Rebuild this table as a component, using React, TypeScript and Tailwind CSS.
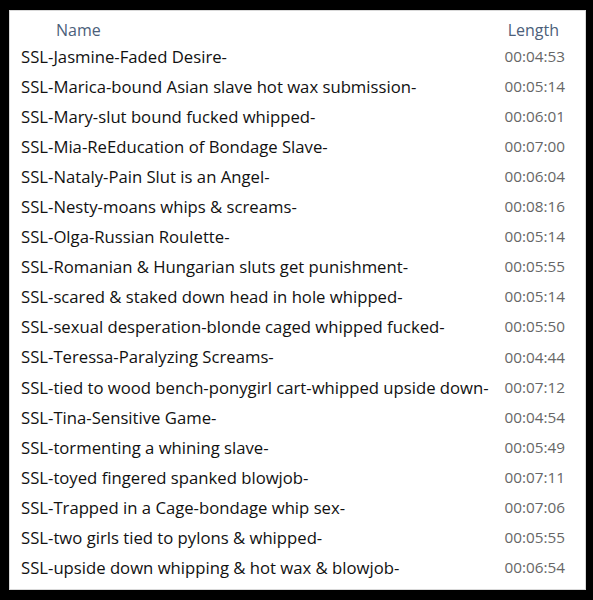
const rows: [string, string][] = [
  ["SSL-Jasmine-Faded Desire-", "00:04:53"],
  ["SSL-Marica-bound Asian slave hot wax submission-", "00:05:14"],
  ["SSL-Mary-slut bound fucked whipped-", "00:06:01"],
  ["SSL-Mia-ReEducation of Bondage Slave-", "00:07:00"],
  ["SSL-Nataly-Pain Slut is an Angel-", "00:06:04"],
  ["SSL-Nesty-moans whips & screams-", "00:08:16"],
  ["SSL-Olga-Russian Roulette-", "00:05:14"],
  ["SSL-Romanian & Hungarian sluts get punishment-", "00:05:55"],
  ["SSL-scared & staked down head in hole whipped-", "00:05:14"],
  ["SSL-sexual desperation-blonde caged whipped fucked-", "00:05:50"],
  ["SSL-Teressa-Paralyzing Screams-", "00:04:44"],
  ["SSL-tied to wood bench-ponygirl cart-whipped upside down-", "00:07:12"],
  ["SSL-Tina-Sensitive Game-", "00:04:54"],
  ["SSL-tormenting a whining slave-", "00:05:49"],
  ["SSL-toyed fingered spanked blowjob-", "00:07:11"],
  ["SSL-Trapped in a Cage-bondage whip sex-", "00:07:06"],
  ["SSL-two girls tied to pylons & whipped-", "00:05:55"],
  ["SSL-upside down whipping & hot wax & blowjob-", "00:06:54"],
]

export default function App() {
  return (
    <div className="h-[600px] w-[593px] bg-black pt-[10px] pl-[9px] pr-[7px] pb-[10px] font-['Open_Sans',sans-serif]">
      <div className="flex h-full flex-col border border-[#d9d9d9] bg-white">
        {/* header */}
        <div className="flex h-[30px] items-center pt-[8px] pl-[46px] pr-[26px] text-[16px] text-[#4c607a]">
          <span className="flex-1">Name</span>
          <span>Length</span>
        </div>
        {rows.map(([name, len]) => (
          <div
            key={name}
            className="flex h-[30.1px] items-center pl-[11px] pr-[20px]"
          >
            <span className="flex-1 text-[16.7px] text-[#111]">{name}</span>
            <span className="text-[15.3px] text-[#666]">{len}</span>
          </div>
        ))}
      </div>
    </div>
  )
}
